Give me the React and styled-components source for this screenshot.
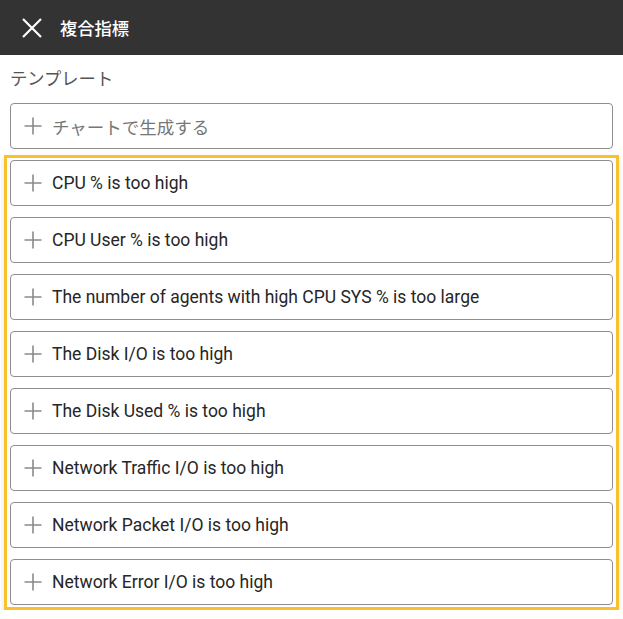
import React from "react";
import styled, { createGlobalStyle } from "styled-components";

const items = [
  "CPU % is too high",
  "CPU User % is too high",
  "The number of agents with high CPU SYS % is too large",
  "The Disk I/O is too high",
  "The Disk Used % is too high",
  "Network Traffic I/O is too high",
  "Network Packet I/O is too high",
  "Network Error I/O is too high",
];

function PlusIcon() {
  return (
    <svg width="18" height="18" viewBox="0 0 18 18">
      <path d="M9 0.5v17M0.5 9h17" stroke="#8a8a8a" strokeWidth="1.6" fill="none" />
    </svg>
  );
}

function CloseIcon() {
  return (
    <svg width="22" height="22" viewBox="0 0 22 22">
      <path d="M2 2l18 18M20 2L2 20" stroke="#fff" strokeWidth="2.2" fill="none" />
    </svg>
  );
}

export default function App() {
  return (
    <>
      <GlobalStyle />
      <Header>
        <CloseIcon />
        <Title>複合指標</Title>
      </Header>
      <Body>
        <Label>テンプレート</Label>
        <ItemButton $muted>
          <PlusIcon />
          <span>チャートで生成する</span>
        </ItemButton>
        <Highlight>
          {items.map((text) => (
            <ItemButton key={text}>
              <PlusIcon />
              <span>{text}</span>
            </ItemButton>
          ))}
        </Highlight>
      </Body>
    </>
  );
}

const GlobalStyle = createGlobalStyle`
  body {
    margin: 0;
    background: #fff;
    font-family: Roboto, "Noto Sans CJK JP", sans-serif;
  }
`;

const Header = styled.div`
  height: 55px;
  background: #333333;
  display: flex;
  align-items: center;
  padding-left: 21px;
  gap: 17px;
`;

const Title = styled.div`
  color: #fff;
  font-size: 17.3px;
  font-weight: 500;
  font-family: "Noto Sans CJK JP", sans-serif;
`;

const Body = styled.div`
  padding: 0 10px;
`;

const Label = styled.div`
  font-family: "Noto Sans CJK JP", sans-serif;
  font-size: 17.3px;
  color: #555;
  height: 48px;
  line-height: 46px;
`;

const ItemButton = styled.div`
  box-sizing: border-box;
  height: 46px;
  border: 1px solid #8e8e8e;
  border-radius: 4px;
  display: flex;
  align-items: center;
  padding-left: 13px;
  gap: 10px;
  font-size: 17.5px;
  color: ${(p) => (p.$muted ? "#777" : "#262626")};
  font-family: ${(p) =>
    p.$muted ? '"Noto Sans CJK JP", sans-serif' : 'Roboto, "Noto Sans CJK JP", sans-serif'};
  background: #fff;
`;

const Highlight = styled.div`
  margin: 6px -6px 0;
  border: 3px solid #fbc02d;
  padding: 2px 3px 2px;
  display: flex;
  flex-direction: column;
  gap: 11px;
  box-shadow: 0 3px 6px rgba(0, 0, 0, 0.12);
`;
